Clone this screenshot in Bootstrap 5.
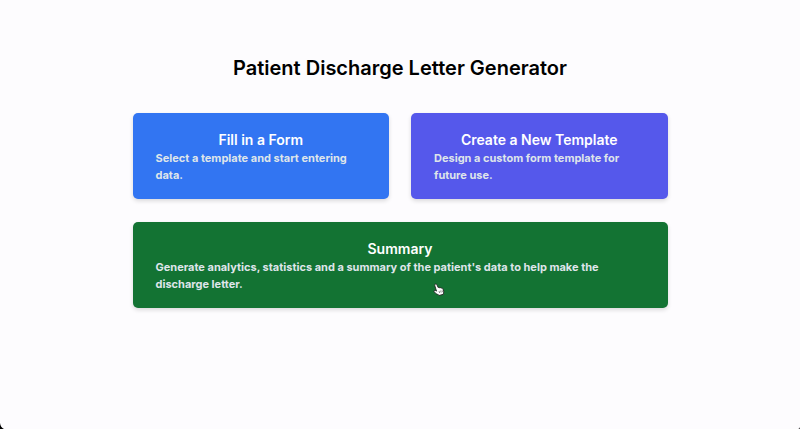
<!DOCTYPE html>
<html lang="en">
<head>
<meta charset="utf-8">
<meta name="viewport" content="width=device-width, initial-scale=1">
<title>Patient Discharge Letter Generator</title>
<link href="https://cdn.jsdelivr.net/npm/bootstrap@5.3.0/dist/css/bootstrap.min.css" rel="stylesheet">
<style>
  body { background: #fdfcfe; color: #000; font-family: Inter, "Liberation Sans", sans-serif; }
  .menu-wrap { max-width: 535px; padding-top: 53px; }
  .page-title { font-size: 20px; line-height: 30px; font-weight: 600; margin-bottom: 30px; }
  .menu-grid { --bs-gutter-x: 22px; --bs-gutter-y: 23px; }
  .menu-tile { padding: 16px 23px 15px; border-radius: 5px; color: #fff; box-shadow: 0 2px 4px rgba(0, 0, 0, .14); }
  .tile-form { background: #3275f2; }
  .tile-template { background: #5558eb; }
  .tile-summary { background: #137333; }
  .tile-title { font-size: 14px; line-height: 21px; font-weight: 600; }
  .tile-text { font-size: 11px; line-height: 17px; font-weight: 700; color: #dfe5ea; }
  .pointer-hand { left: 433px; top: 283px; }
</style>
</head>
<body class="min-vh-100 position-relative overflow-hidden">
<main class="menu-wrap mx-auto">
  <h1 class="page-title text-center">Patient Discharge Letter Generator</h1>
  <div class="row menu-grid">
    <div class="col-6">
      <button type="button" class="menu-tile tile-form border-0 w-100 h-100">
        <span class="tile-title d-block text-center">Fill in a Form</span>
        <span class="tile-text d-block text-start">Select a template and start entering data.</span>
      </button>
    </div>
    <div class="col-6">
      <button type="button" class="menu-tile tile-template border-0 w-100 h-100">
        <span class="tile-title d-block text-center">Create a New Template</span>
        <span class="tile-text d-block text-start">Design a custom form template for future use.</span>
      </button>
    </div>
    <div class="col-12">
      <button type="button" class="menu-tile tile-summary border-0 w-100">
        <span class="tile-title d-block text-center">Summary</span>
        <span class="tile-text d-block text-start">Generate analytics, statistics and a summary of the patient's data to help make the discharge letter.</span>
      </button>
    </div>
  </div>
</main>
<!-- Hand pointer -->
<svg class="pointer-hand position-absolute pe-none" width="12" height="13" viewBox="0 0 12 13" aria-hidden="true">
  <path d="M2.2 1.2c.8-.5 1.5 0 1.8.8L5.2 4.6c.6-.4 1.2-.2 1.5.3.6-.4 1.3-.2 1.6.3.7-.3 1.3 0 1.6.7.7 1.5 1.3 2.8.5 4.3l.2 1-4.6 1.3-.6-.8C4.100 11.400 2.400 10.300 1.300 9c-.8-1 .2-2 1.300-1.400l.9.500L1.800 2.700c-.2-.7-.1-1.200.4-1.500z" fill="#fff" stroke="#222" stroke-width=".9" stroke-linejoin="round"/>
  <path d="M6 8l.7 2M7.500 7.600l.7 2M9 7.200l.5 1.900" stroke="#444" stroke-width=".6" fill="none"/>
</svg>
<!-- Rounded window corners -->
<svg class="position-absolute bottom-0 start-0 pe-none" width="4" height="6" viewBox="0 0 4 6" aria-hidden="true"><path d="M0 0Q.5 4.500 4 6H0z" fill="#000"/></svg>
<svg class="position-absolute bottom-0 end-0 pe-none" width="2" height="2" viewBox="0 0 2 2" aria-hidden="true"><path d="M2 0Q1.800 1.800 0 2H2z" fill="#222"/></svg>
<script src="https://cdn.jsdelivr.net/npm/bootstrap@5.3.0/dist/js/bootstrap.bundle.min.js"></script>
</body>
</html>
